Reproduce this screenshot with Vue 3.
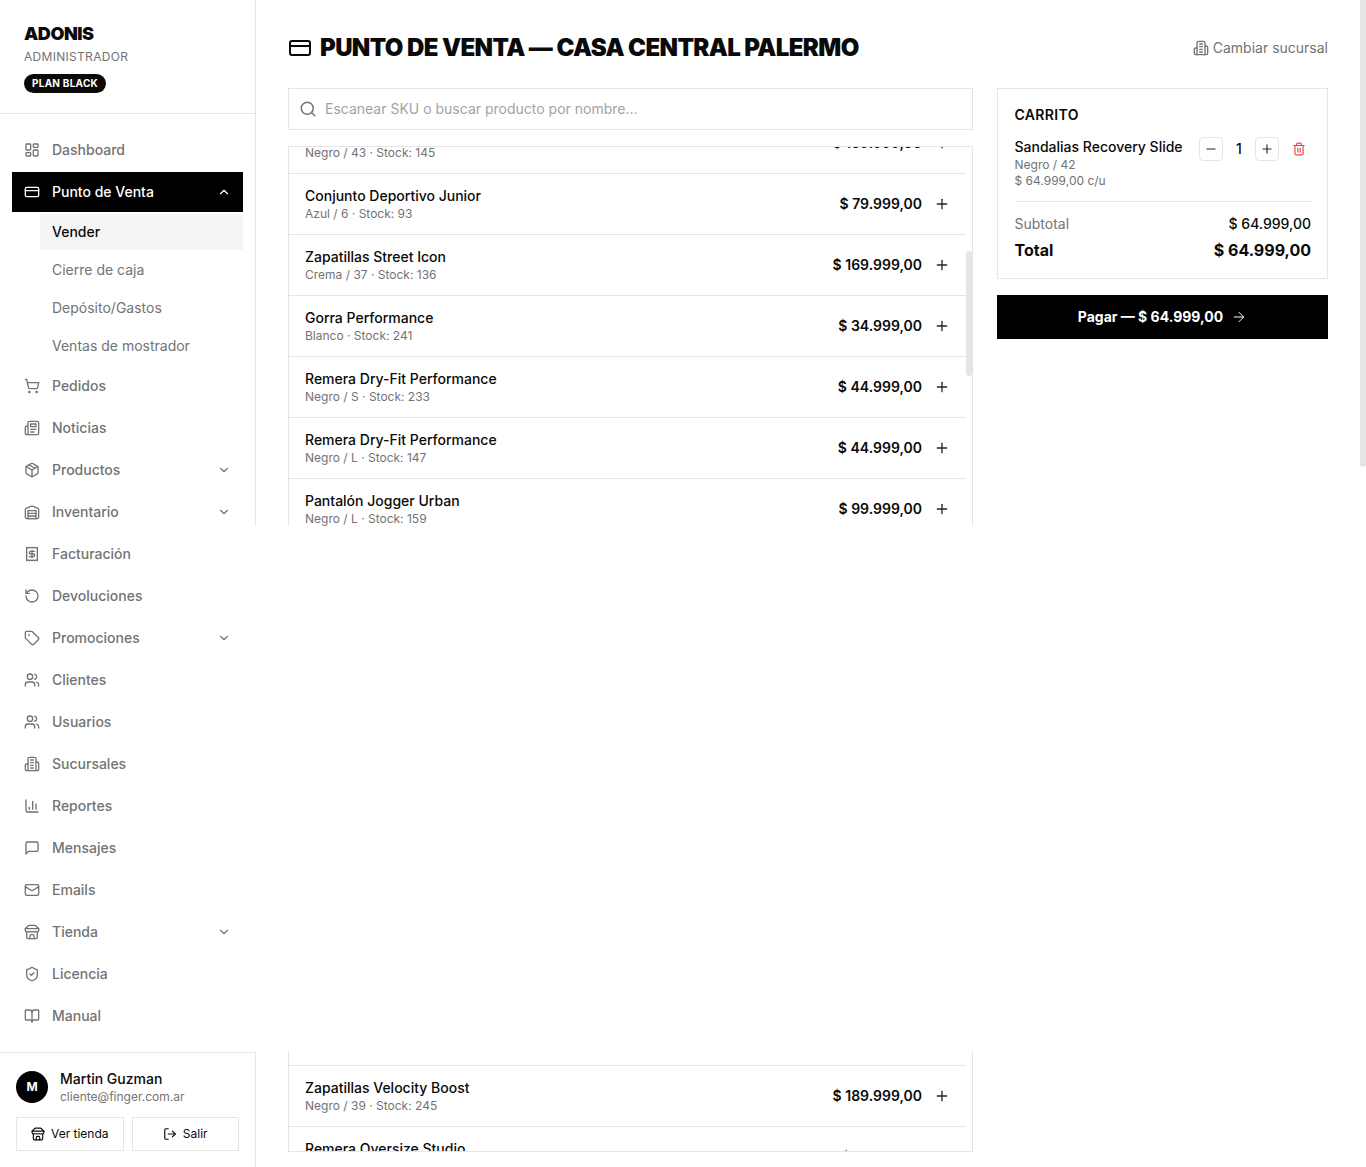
<script setup>
const icons = {
  dashboard: '<rect x="3" y="3" width="7" height="9" rx="1"/><rect x="14" y="3" width="7" height="5" rx="1"/><rect x="14" y="12" width="7" height="9" rx="1"/><rect x="3" y="16" width="7" height="5" rx="1"/>',
  card: '<rect x="2" y="5" width="20" height="14" rx="2"/><path d="M2 10h20"/>',
  cart: '<circle cx="8" cy="21" r="1"/><circle cx="19" cy="21" r="1"/><path d="M2.05 2.05h2l2.66 12.42a2 2 0 0 0 2 1.58h9.78a2 2 0 0 0 1.95-1.57l1.65-7.43H5.12"/>',
  news: '<path d="M4 22h16a2 2 0 0 0 2-2V4a2 2 0 0 0-2-2H8a2 2 0 0 0-2 2v16a2 2 0 0 1-2 2Zm0 0a2 2 0 0 1-2-2v-9c0-1.1.9-2 2-2h2"/><path d="M18 14h-8"/><path d="M15 18h-5"/><path d="M10 6h8v4h-8V6Z"/>',
  box: '<path d="M11 21.73a2 2 0 0 0 2 0l7-4A2 2 0 0 0 21 16V8a2 2 0 0 0-1-1.73l-7-4a2 2 0 0 0-2 0l-7 4A2 2 0 0 0 3 8v8a2 2 0 0 0 1 1.73z"/><path d="M12 22V12"/><path d="m3.3 7 8.7 5 8.7-5"/><path d="m7.5 4.27 9 5.15"/>',
  warehouse: '<path d="M22 8.35V20a2 2 0 0 1-2 2H4a2 2 0 0 1-2-2V8.35A2 2 0 0 1 3.26 6.5l8-3.2a2 2 0 0 1 1.48 0l8 3.2A2 2 0 0 1 22 8.35Z"/><path d="M6 18h12"/><path d="M6 14h12"/><rect x="6" y="10" width="12" height="12"/>',
  receipt: '<path d="M4 2v20l2-1 2 1 2-1 2 1 2-1 2 1 2-1 2 1V2l-2 1-2-1-2 1-2-1-2 1-2-1-2 1Z"/><path d="M16 8h-6a2 2 0 1 0 0 4h4a2 2 0 1 1 0 4H8"/><path d="M12 17.5v-11"/>',
  undo: '<path d="M3 12a9 9 0 1 0 9-9 9.75 9.75 0 0 0-6.74 2.74L3 8"/><path d="M3 3v5h5"/>',
  tag: '<path d="M12.586 2.586A2 2 0 0 0 11.172 2H4a2 2 0 0 0-2 2v7.172a2 2 0 0 0 .586 1.414l8.704 8.704a2.426 2.426 0 0 0 3.42 0l6.58-6.58a2.426 2.426 0 0 0 0-3.42z"/><circle cx="7.5" cy="7.5" r=".5"/>',
  users: '<path d="M16 21v-2a4 4 0 0 0-4-4H6a4 4 0 0 0-4 4v2"/><circle cx="9" cy="7" r="4"/><path d="M22 21v-2a4 4 0 0 0-3-3.87"/><path d="M16 3.13a4 4 0 0 1 0 7.75"/>',
  building: '<path d="M6 22V4a2 2 0 0 1 2-2h8a2 2 0 0 1 2 2v18Z"/><path d="M6 12H4a2 2 0 0 0-2 2v6a2 2 0 0 0 2 2h2"/><path d="M18 9h2a2 2 0 0 1 2 2v9a2 2 0 0 1-2 2h-2"/><path d="M10 6h4"/><path d="M10 10h4"/><path d="M10 14h4"/><path d="M10 18h4"/>',
  chart: '<path d="M3 3v16a2 2 0 0 0 2 2h16"/><path d="M18 17V9"/><path d="M13 17V5"/><path d="M8 17v-3"/>',
  message: '<path d="M21 15a2 2 0 0 1-2 2H7l-4 4V5a2 2 0 0 1 2-2h14a2 2 0 0 1 2 2z"/>',
  mail: '<rect x="2" y="4" width="20" height="16" rx="2"/><path d="m22 7-8.97 5.7a1.94 1.94 0 0 1-2.06 0L2 7"/>',
  store: '<path d="m2 7 4.41-4.41A2 2 0 0 1 7.83 2h8.34a2 2 0 0 1 1.42.59L22 7"/><path d="M4 12v8a2 2 0 0 0 2 2h12a2 2 0 0 0 2-2v-8"/><path d="M15 22v-4a2 2 0 0 0-2-2h-2a2 2 0 0 0-2 2v4"/><path d="M2 7h20"/><path d="M22 7v3a2 2 0 0 1-2 2a2.7 2.7 0 0 1-1.59-.63.7.7 0 0 0-.82 0A2.7 2.7 0 0 1 16 12a2.7 2.7 0 0 1-1.59-.63.7.7 0 0 0-.82 0A2.7 2.7 0 0 1 12 12a2.7 2.7 0 0 1-1.59-.63.7.7 0 0 0-.82 0A2.7 2.7 0 0 1 8 12a2.7 2.7 0 0 1-1.59-.63.7.7 0 0 0-.82 0A2.7 2.7 0 0 1 4 12a2 2 0 0 1-2-2V7"/>',
  shield: '<path d="M20 13c0 5-3.5 7.5-7.66 8.95a1 1 0 0 1-.67-.01C7.5 20.5 4 18 4 13V6a1 1 0 0 1 1-1c2 0 4.5-1.2 6.24-2.72a1.17 1.17 0 0 1 1.52 0C14.51 3.81 17 5 19 5a1 1 0 0 1 1 1z"/><path d="m9 12 2 2 4-4"/>',
  book: '<path d="M12 7v14"/><path d="M3 18a1 1 0 0 1-1-1V4a1 1 0 0 1 1-1h5a4 4 0 0 1 4 4 4 4 0 0 1 4-4h5a1 1 0 0 1 1 1v13a1 1 0 0 1-1 1h-6a3 3 0 0 0-3 3 3 3 0 0 0-3-3z"/>',
  down: '<path d="m6 9 6 6 6-6"/>',
  up: '<path d="m18 15-6-6-6 6"/>',
  search: '<circle cx="11" cy="11" r="8"/><path d="m21 21-4.3-4.3"/>',
  plus: '<path d="M5 12h14"/><path d="M12 5v14"/>',
  minus: '<path d="M5 12h14"/>',
  arrow: '<path d="M5 12h14"/><path d="m12 5 7 7-7 7"/>',
  logout: '<path d="M9 21H5a2 2 0 0 1-2-2V5a2 2 0 0 1 2-2h4"/><path d="m16 17 5-5-5-5"/><path d="M21 12H9"/>',
  trash: '<path d="M3 6h18"/><path d="M19 6v14c0 1-1 2-2 2H7c-1 0-2-1-2-2V6"/><path d="M8 6V4c0-1 1-2 2-2h4c1 0 2 1 2 2v2"/><path d="M10 11v6"/><path d="M14 11v6"/>',
}

const menuBefore = [{ label: 'Dashboard', icon: 'dashboard' }]
const subItems = ['Vender', 'Cierre de caja', 'Depósito/Gastos', 'Ventas de mostrador']
const menuAfter = [
  { label: 'Pedidos', icon: 'cart' },
  { label: 'Noticias', icon: 'news' },
  { label: 'Productos', icon: 'box', more: true },
  { label: 'Inventario', icon: 'warehouse', more: true },
  { label: 'Facturación', icon: 'receipt' },
  { label: 'Devoluciones', icon: 'undo' },
  { label: 'Promociones', icon: 'tag', more: true },
  { label: 'Clientes', icon: 'users' },
  { label: 'Usuarios', icon: 'users' },
  { label: 'Sucursales', icon: 'building' },
  { label: 'Reportes', icon: 'chart' },
  { label: 'Mensajes', icon: 'message' },
  { label: 'Emails', icon: 'mail' },
  { label: 'Tienda', icon: 'store', more: true },
  { label: 'Licencia', icon: 'shield' },
  { label: 'Manual', icon: 'book' },
]

const topProducts = [
  { name: 'Zapatillas Runner Pro', sub: 'Negro / 43 · Stock: 145', price: '$ 159.999,00' },
  { name: 'Conjunto Deportivo Junior', sub: 'Azul / 6 · Stock: 93', price: '$ 79.999,00' },
  { name: 'Zapatillas Street Icon', sub: 'Crema / 37 · Stock: 136', price: '$ 169.999,00' },
  { name: 'Gorra Performance', sub: 'Blanco · Stock: 241', price: '$ 34.999,00' },
  { name: 'Remera Dry-Fit Performance', sub: 'Negro / S · Stock: 233', price: '$ 44.999,00' },
  { name: 'Remera Dry-Fit Performance', sub: 'Negro / L · Stock: 147', price: '$ 44.999,00' },
  { name: 'Pantalón Jogger Urban', sub: 'Negro / L · Stock: 159', price: '$ 99.999,00' },
]
const bottomProducts = [
  { name: 'Zapatillas Velocity Boost', sub: 'Negro / 39 · Stock: 245', price: '$ 189.999,00' },
  { name: 'Remera Oversize Studio', sub: 'Blanco / M · Stock: 118', price: '$ 19.999,00' },
]
</script>

<template>
  <div class="page">
    <aside class="sidebar">
      <div class="brand">
        <div class="brand-name">ADONIS</div>
        <div class="brand-role">ADMINISTRADOR</div>
        <span class="pill">PLAN BLACK</span>
      </div>

      <nav class="nav">
        <a v-for="item in menuBefore" :key="item.label" class="nav-item">
          <svg class="ico" viewBox="0 0 24 24" v-html="icons[item.icon]"></svg>
          <span>{{ item.label }}</span>
        </a>
        <a class="nav-item active">
          <svg class="ico" viewBox="0 0 24 24" v-html="icons.card"></svg>
          <span>Punto de Venta</span>
          <svg class="chev" viewBox="0 0 24 24" v-html="icons.up"></svg>
        </a>
        <a v-for="(sub, i) in subItems" :key="sub" class="sub-item" :class="{ current: i === 0 }">{{ sub }}</a>
        <a v-for="item in menuAfter" :key="item.label" class="nav-item">
          <svg class="ico" viewBox="0 0 24 24" v-html="icons[item.icon]"></svg>
          <span>{{ item.label }}</span>
          <svg v-if="item.more" class="chev" viewBox="0 0 24 24" v-html="icons.down"></svg>
        </a>
      </nav>

      <div class="account">
        <div class="user">
          <div class="avatar">M</div>
          <div>
            <div class="user-name">Martin Guzman</div>
            <div class="user-mail">cliente@finger.com.ar</div>
          </div>
        </div>
        <div class="account-actions">
          <button class="ghost">
            <svg class="ico-sm" viewBox="0 0 24 24" v-html="icons.store"></svg>
            Ver tienda
          </button>
          <button class="ghost">
            <svg class="ico-sm" viewBox="0 0 24 24" v-html="icons.logout"></svg>
            Salir
          </button>
        </div>
      </div>
    </aside>

    <main class="main">
      <header class="top">
        <h1 class="title">
          <svg class="title-ico" viewBox="0 0 24 24" v-html="icons.card"></svg>
          PUNTO DE VENTA — CASA CENTRAL PALERMO
        </h1>
        <a class="switch">
          <svg class="ico" viewBox="0 0 24 24" v-html="icons.building"></svg>
          Cambiar sucursal
        </a>
      </header>

      <div class="columns">
        <section class="left">
          <label class="search">
            <svg class="search-ico" viewBox="0 0 24 24" v-html="icons.search"></svg>
            <input type="text" placeholder="Escanear SKU o buscar producto por nombre..." />
          </label>

          <div class="list list-top">
            <div class="rows rows-top">
              <div v-for="p in topProducts" :key="p.sub" class="row">
                <div>
                  <div class="row-name">{{ p.name }}</div>
                  <div class="row-sub">{{ p.sub }}</div>
                </div>
                <div class="row-end">
                  <span class="row-price">{{ p.price }}</span>
                  <svg class="ico add" viewBox="0 0 24 24" v-html="icons.plus"></svg>
                </div>
              </div>
            </div>
            <div class="thumb"></div>
          </div>

          <div class="list list-bottom">
            <div class="rows">
              <div class="row-stub"></div>
              <div v-for="p in bottomProducts" :key="p.sub" class="row">
                <div>
                  <div class="row-name">{{ p.name }}</div>
                  <div class="row-sub">{{ p.sub }}</div>
                </div>
                <div class="row-end">
                  <span class="row-price">{{ p.price }}</span>
                  <svg class="ico add" viewBox="0 0 24 24" v-html="icons.plus"></svg>
                </div>
              </div>
            </div>
          </div>
        </section>

        <section class="right">
          <div class="cart">
            <h2 class="cart-title">CARRITO</h2>
            <div class="cart-item">
              <div class="cart-info">
                <div class="row-name">Sandalias Recovery Slide</div>
                <div class="row-sub">Negro / 42</div>
                <div class="row-sub">$ 64.999,00 c/u</div>
              </div>
              <div class="qty">
                <button class="qty-btn"><svg class="ico-xs" viewBox="0 0 24 24" v-html="icons.minus"></svg></button>
                <span class="qty-num">1</span>
                <button class="qty-btn"><svg class="ico-xs" viewBox="0 0 24 24" v-html="icons.plus"></svg></button>
                <button class="qty-del"><svg class="ico-xs" viewBox="0 0 24 24" v-html="icons.trash"></svg></button>
              </div>
            </div>
            <div class="sum">
              <div class="sum-line">
                <span class="sum-label">Subtotal</span>
                <span class="sum-value">$ 64.999,00</span>
              </div>
              <div class="sum-line total">
                <span>Total</span>
                <span>$ 64.999,00</span>
              </div>
            </div>
          </div>
          <button class="pay">
            Pagar — $ 64.999,00
            <svg class="ico" viewBox="0 0 24 24" v-html="icons.arrow"></svg>
          </button>
        </section>
      </div>
    </main>

    <!-- blank band of the capture, lies over sidebar edge and main -->
    <div class="blank"></div>
    <div class="page-thumb"></div>
  </div>
</template>

<style scoped>
.page {
  position: relative;
  display: flex;
  width: 1366px;
  height: 1167px;
  overflow: hidden;
  background: #fff;
  color: #0a0a0a;
  font-family: Inter, "Liberation Sans", sans-serif;
  font-size: 14px;
  line-height: 20px;
}

svg {
  fill: none;
  stroke: currentColor;
  stroke-width: 2;
  stroke-linecap: round;
  stroke-linejoin: round;
  flex-shrink: 0;
}
.ico { width: 16px; height: 16px; }
.ico-sm { width: 14px; height: 14px; }
.ico-xs { width: 14px; height: 14px; }

.sidebar {
  width: 256px;
  flex-shrink: 0;
  box-sizing: border-box;
  display: flex;
  flex-direction: column;
  border-right: 1px solid #e5e5e5;
}
.brand {
  padding: 20px 24px 20px;
  border-bottom: 1px solid #e5e5e5;
}
.brand-name {
  font-size: 18px;
  line-height: 28px;
  font-weight: 900;
  letter-spacing: -0.025em;
}
.brand-role {
  margin-top: 1px;
  font-size: 12px;
  line-height: 16px;
  color: #737373;
  letter-spacing: 0.025em;
}
.pill {
  display: inline-block;
  margin-top: 9px;
  padding: 0 8px;
  height: 19px;
  line-height: 19px;
  border-radius: 10px;
  background: #0a0a0a;
  color: #fff;
  font-size: 10px;
  font-weight: 700;
  letter-spacing: 0.025em;
  vertical-align: top;
}

.nav {
  flex: 1;
  display: flex;
  flex-direction: column;
  gap: 2px;
  padding: 16px 12px;
}
.nav-item {
  display: flex;
  align-items: center;
  gap: 12px;
  height: 40px;
  padding: 0 12px;
  color: #737373;
  font-weight: 500;
}
.nav-item span { flex: 1; }
.nav-item.active {
  background: #000;
  color: #fff;
}
.chev { width: 14px; height: 14px; }
.sub-item {
  display: flex;
  align-items: center;
  height: 36px;
  margin-left: 28px;
  padding-left: 12px;
  color: #737373;
}
.sub-item.current {
  background: #f5f5f5;
  color: #0a0a0a;
  font-weight: 500;
}

.account {
  padding: 16px;
  border-top: 1px solid #e5e5e5;
}
.user {
  display: flex;
  align-items: center;
  gap: 12px;
}
.avatar {
  width: 32px;
  height: 32px;
  border-radius: 50%;
  background: #000;
  color: #fff;
  font-size: 12px;
  font-weight: 700;
  display: flex;
  align-items: center;
  justify-content: center;
}
.user-name { font-weight: 500; }
.user-mail {
  font-size: 12px;
  line-height: 16px;
  color: #737373;
}
.account-actions {
  display: grid;
  grid-template-columns: 1fr 1fr;
  gap: 8px;
  margin-top: 12px;
}
.ghost {
  height: 34px;
  display: flex;
  align-items: center;
  justify-content: center;
  gap: 6px;
  background: #fff;
  border: 1px solid #e5e5e5;
  color: #0a0a0a;
  font: 400 12px/16px Inter, "Liberation Sans", sans-serif;
}

.main {
  flex: 1;
  min-width: 0;
  padding: 32px 38px 0 32px;
}
.top {
  display: flex;
  align-items: center;
  justify-content: space-between;
  height: 32px;
  margin-bottom: 24px;
}
.title {
  display: flex;
  align-items: center;
  gap: 8px;
  margin: 0;
  font-size: 24px;
  line-height: 32px;
  font-weight: 900;
  letter-spacing: -0.025em;
}
.title-ico { width: 24px; height: 24px; }
.switch {
  display: flex;
  align-items: center;
  gap: 4px;
  color: #737373;
}

.columns {
  display: grid;
  grid-template-columns: 685px 331px;
  gap: 24px;
}

.search {
  display: flex;
  align-items: center;
  gap: 8px;
  height: 42px;
  box-sizing: border-box;
  padding: 0 12px 0 10px;
  border: 1px solid #e5e5e5;
}
.search-ico {
  width: 18px;
  height: 18px;
  color: #737373;
}
.search input {
  flex: 1;
  border: 0;
  outline: 0;
  padding: 0;
  color: #0a0a0a;
  font: 400 14px/20px Inter, "Liberation Sans", sans-serif;
}
.search input::placeholder { color: #a3a3a3; }

.list {
  position: relative;
  box-sizing: border-box;
  border: 1px solid #e5e5e5;
  overflow: hidden;
}
.list-top {
  height: 380px;
  margin-top: 16px;
  border-bottom: 0;
}
.list-bottom {
  height: 100px;
  margin-top: 526px;
  border-top: 0;
}
.rows { margin-right: 6px; }
.rows-top { margin-top: -34px; }
.row,
.row-stub {
  border-bottom: 1px solid #e5e5e5;
}
.row-stub { height: 13px; }
.row {
  display: flex;
  align-items: center;
  justify-content: space-between;
  padding: 12px 16px;
}
.row-name { font-weight: 500; }
.row-sub {
  font-size: 12px;
  line-height: 16px;
  color: #737373;
}
.row-end {
  display: flex;
  align-items: center;
  gap: 12px;
}
.row-price { font-weight: 600; }
.add { color: #262626; }
.thumb {
  position: absolute;
  top: 104px;
  right: 0;
  width: 6px;
  height: 125px;
  border-radius: 3px;
  background: #e5e5e5;
}

.cart {
  border: 1px solid #e5e5e5;
  padding: 16px 16px 16px 16.5px;
}
.cart-title {
  margin: 0 0 4px;
  font-size: 14px;
  line-height: 20px;
  font-weight: 600;
  letter-spacing: 0.025em;
}
.cart-item {
  display: flex;
  justify-content: space-between;
  padding: 8px 0 12px;
  border-bottom: 1px solid #e5e5e5;
}
.qty {
  display: flex;
  align-items: flex-start;
}
.qty-btn,
.qty-del {
  width: 24px;
  height: 24px;
  padding: 0;
  display: flex;
  align-items: center;
  justify-content: center;
  background: #fff;
  border: 1px solid #e5e5e5;
  border-radius: 4px;
  color: #262626;
}
.qty-del {
  margin-left: 8px;
  border: 0;
  color: #ef4444;
}
.qty-num {
  width: 32px;
  text-align: center;
  line-height: 24px;
  font-weight: 500;
}
.sum { padding-top: 12px; }
.sum-line {
  display: flex;
  justify-content: space-between;
}
.sum-label { color: #737373; }
.sum-value { font-weight: 500; }
.sum-line.total {
  margin-top: 4px;
  font-size: 16px;
  line-height: 24px;
  font-weight: 700;
}
.pay {
  width: 100%;
  height: 44px;
  margin-top: 16px;
  display: flex;
  align-items: center;
  justify-content: center;
  gap: 8px;
  border: 0;
  background: #000;
  color: #fff;
  font: 700 14px/20px Inter, "Liberation Sans", sans-serif;
}
.pay svg { stroke-width: 1.5; }

.blank {
  position: absolute;
  left: 255px;
  right: 0;
  top: 526px;
  height: 526px;
  background: #fff;
}
.page-thumb {
  position: absolute;
  top: 0;
  right: 0;
  width: 6px;
  height: 467px;
  border-radius: 0 0 3px 3px;
  background: #e5e5e5;
}
</style>
